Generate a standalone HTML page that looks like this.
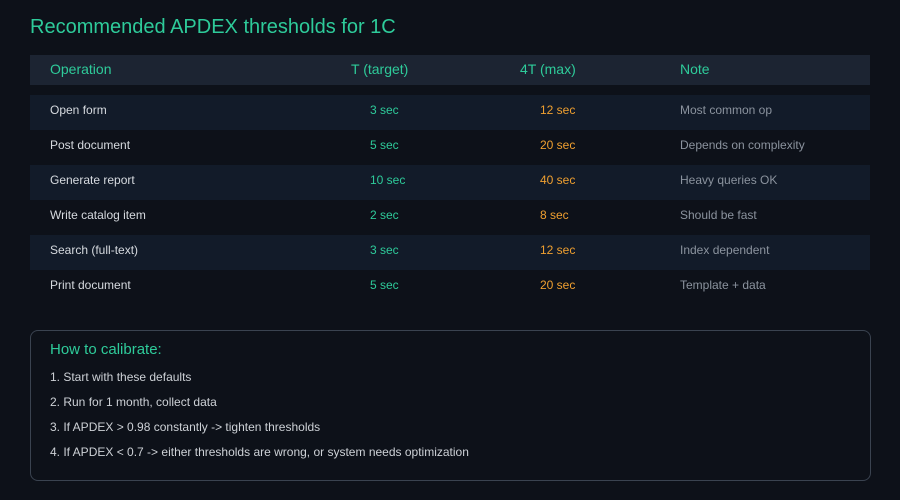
<!DOCTYPE html><html><head><style>
body{margin:0;width:900px;height:500px;background:#0d1119;font-family:"Liberation Sans",sans-serif;position:relative;overflow:hidden}
.a{position:absolute;white-space:nowrap}
.t{left:30px;top:16px;font-size:20px;color:#2ecb9a}
.hd{position:absolute;left:30px;top:55px;width:840px;height:30px;background:#1c2432}
.r{position:absolute;left:30px;width:840px;height:35px}
.r.s{background:#121b29}
.h{font-size:14px;color:#2ecb9a;top:61px}
.c{font-size:12px}
.op{color:#d6dadf}.tg{color:#2ecb9a}.mx{color:#f0a030}.nt{color:#8b939e}
.box{position:absolute;left:30px;top:330px;width:839px;height:149px;border:1px solid #3a4350;border-radius:8px}
.li{font-size:12px;color:#cdd1d6;left:50px}
</style></head><body>
<div class="a t">Recommended APDEX thresholds for 1C</div>
<div class="hd"></div>
<div class="a h" style="left:50px">Operation</div>
<div class="a h" style="left:351px">T (target)</div>
<div class="a h" style="left:520px">4T (max)</div>
<div class="a h" style="left:680px">Note</div>
<div class="r s" style="top:95px"></div>
<div class="r s" style="top:165px"></div>
<div class="r s" style="top:235px"></div>
<div class="a c op" style="left:50px;top:103px">Open form</div><div class="a c tg" style="left:370px;top:103px">3 sec</div><div class="a c mx" style="left:540px;top:103px">12 sec</div><div class="a c nt" style="left:680px;top:103px">Most common op</div>
<div class="a c op" style="left:50px;top:138px">Post document</div><div class="a c tg" style="left:370px;top:138px">5 sec</div><div class="a c mx" style="left:540px;top:138px">20 sec</div><div class="a c nt" style="left:680px;top:138px">Depends on complexity</div>
<div class="a c op" style="left:50px;top:173px">Generate report</div><div class="a c tg" style="left:370px;top:173px">10 sec</div><div class="a c mx" style="left:540px;top:173px">40 sec</div><div class="a c nt" style="left:680px;top:173px">Heavy queries OK</div>
<div class="a c op" style="left:50px;top:208px">Write catalog item</div><div class="a c tg" style="left:370px;top:208px">2 sec</div><div class="a c mx" style="left:540px;top:208px">8 sec</div><div class="a c nt" style="left:680px;top:208px">Should be fast</div>
<div class="a c op" style="left:50px;top:243px">Search (full-text)</div><div class="a c tg" style="left:370px;top:243px">3 sec</div><div class="a c mx" style="left:540px;top:243px">12 sec</div><div class="a c nt" style="left:680px;top:243px">Index dependent</div>
<div class="a c op" style="left:50px;top:278px">Print document</div><div class="a c tg" style="left:370px;top:278px">5 sec</div><div class="a c mx" style="left:540px;top:278px">20 sec</div><div class="a c nt" style="left:680px;top:278px">Template + data</div>
<div class="box"></div>
<div class="a" style="left:50px;top:341px;font-size:15px;color:#2ecb9a">How to calibrate:</div>
<div class="a li" style="top:370px">1. Start with these defaults</div>
<div class="a li" style="top:395px">2. Run for 1 month, collect data</div>
<div class="a li" style="top:420px">3. If APDEX &gt; 0.98 constantly -&gt; tighten thresholds</div>
<div class="a li" style="top:445px">4. If APDEX &lt; 0.7 -&gt; either thresholds are wrong, or system needs optimization</div>
</body></html>
